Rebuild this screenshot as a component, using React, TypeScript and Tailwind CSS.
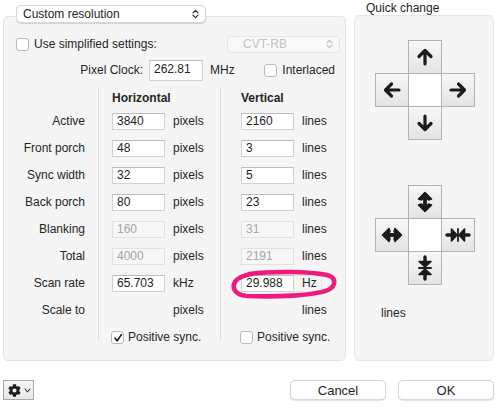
import { FaCog } from "react-icons/fa";

const Checkbox = ({ checked = false }: { checked?: boolean }) => (
  <span className="flex h-[13px] w-[13px] shrink-0 items-center justify-center rounded-[3px] border border-[#b9b9b9] bg-white">
    {checked && (
      <svg width="10" height="10" viewBox="0 0 10 10">
        <path d="M2 5.2 L4.2 7.8 L8.4 1.6" fill="none" stroke="#1a1a1a" strokeWidth="1.6" strokeLinecap="round" strokeLinejoin="round" />
      </svg>
    )}
  </span>
);

const UpDown = ({ color = "#2a2a2a" }: { color?: string }) => (
  <svg width="7" height="10" viewBox="0 0 7 10">
    <path d="M1 3.8 L3.5 1.3 L6 3.8 M1 6.2 L3.5 8.7 L6 6.2" fill="none" stroke={color} strokeWidth="1.2" strokeLinecap="round" strokeLinejoin="round" />
  </svg>
);

const Field = ({ value, disabled = false }: { value: string; disabled?: boolean }) => (
  <div
    className={
      disabled
        ? "flex h-[17px] w-[53px] items-center border border-[#e1e1e1] bg-[#f7f7f7] px-[4px] text-[#a5a5a5]"
        : "flex h-[17px] w-[53px] items-center border border-[#d2d2d2] border-t-[#bdbdbd] bg-white px-[4px] text-[#1e1e1e]"
    }
  >
    {value}
  </div>
);

type Row = { label: string; h?: string; hUnit: string; hDis?: boolean; v?: string; vUnit: string; vDis?: boolean };

const rows: Row[] = [
  { label: "Active", h: "3840", hUnit: "pixels", v: "2160", vUnit: "lines" },
  { label: "Front porch", h: "48", hUnit: "pixels", v: "3", vUnit: "lines" },
  { label: "Sync width", h: "32", hUnit: "pixels", v: "5", vUnit: "lines" },
  { label: "Back porch", h: "80", hUnit: "pixels", v: "23", vUnit: "lines" },
  { label: "Blanking", h: "160", hUnit: "pixels", hDis: true, v: "31", vUnit: "lines", vDis: true },
  { label: "Total", h: "4000", hUnit: "pixels", hDis: true, v: "2191", vUnit: "lines", vDis: true },
  { label: "Scan rate", h: "65.703", hUnit: "kHz", vUnit: "Hz" },
  { label: "Scale to", hUnit: "pixels", vUnit: "lines" },
];

const ink = "#1b1b1b";
const stroke = { fill: "none", stroke: ink, strokeLinecap: "round" as const, strokeLinejoin: "round" as const };
const solid = { fill: ink, stroke: ink, strokeLinejoin: "round" as const, strokeWidth: 1.6 };

const Arrow = ({ rot }: { rot: string }) => (
  <svg width="20" height="20" viewBox="0 0 20 20" className={rot}>
    <path d="M10 17 V4 M4 9.5 L10 3.5 L16 9.5" {...stroke} strokeWidth="3.2" />
  </svg>
);

// vertical double-headed arrow
const Double = ({ rot }: { rot: string }) => (
  <svg width="24" height="24" viewBox="0 0 24 24" className={rot}>
    <path d="M12 7 V17" {...stroke} strokeWidth="3.8" />
    <path d="M5.5 9 L12 2.5 L18.5 9 L15.5 10 L12 7 L8.5 10 Z" {...solid} />
    <path d="M5.5 15 L12 21.5 L18.5 15 L15.5 14 L12 17 L8.5 14 Z" {...solid} />
  </svg>
);

// two arrows pointing in to a bar
const Squeeze = ({ rot }: { rot: string }) => (
  <svg width="26" height="26" viewBox="0 0 26 26" className={rot}>
    <path d="M13 2 V7 M13 24 V19" {...stroke} strokeWidth="3.4" />
    <path d="M7 6.5 L19 6.5 L13 12 Z" {...solid} />
    <path d="M7 19.5 L19 19.5 L13 14 Z" {...solid} />
    <path d="M7 13 H19" fill="none" stroke={ink} strokeWidth="1.8" strokeLinecap="round" />
  </svg>
);

const cell = "flex h-[34px] w-[34px] items-center justify-center border border-[#b3b3b3] bg-linear-to-b from-[#f7f7f7] to-[#e4e4e4]";

const Cross = ({ top, left, right, bottom }: { top: React.ReactNode; left: React.ReactNode; right: React.ReactNode; bottom: React.ReactNode }) => (
  <div className="grid grid-cols-[33px_33px_33px] grid-rows-[33px_33px_33px]">
    <div className="col-start-2 row-start-2 h-[34px] w-[34px] bg-white" />
    <div className={`${cell} col-start-2 row-start-1`}>{top}</div>
    <div className={`${cell} col-start-1 row-start-2`}>{left}</div>
    <div className={`${cell} col-start-3 row-start-2`}>{right}</div>
    <div className={`${cell} col-start-2 row-start-3`}>{bottom}</div>
  </div>
);

export default function App() {
  return (
    <div className="relative h-[413px] w-[504px] overflow-hidden bg-white font-['Liberation_Sans',Arial,sans-serif] text-[12px] leading-[15px] text-[#252525]">
      <div className="flex">
        {/* left column */}
        <div className="ml-[3px] flex w-[343px] flex-col">
          <div className="relative z-10 ml-[13px] mt-[5px] flex h-[18px] w-[190px] items-center justify-between rounded-[5px] border border-[#d8d8d8] bg-white pl-[6px] pr-[6px] shadow-[0_0.5px_1px_rgba(0,0,0,0.15)]">
            <span>Custom resolution</span>
            <UpDown />
          </div>
          <div className="relative -mt-[7px] flex h-[345px] flex-col rounded-[5px] border border-[#e3e3e3] bg-[#f5f5f5]">
            <div className="ml-[12px] mt-[18px] flex h-[18px] items-center">
              <Checkbox />
              <span className="ml-[5px]">Use simplified settings:</span>
              <div className="ml-auto mr-[5px] flex h-[17px] w-[113px] items-center justify-between rounded-[4px] border border-[#e6e6e6] bg-[#f9f9f9] pl-[15px] pr-[6px] text-[#c2c2c2]">
                <span>CVT-RB</span>
                <UpDown color="#c2c2c2" />
              </div>
            </div>
            <div className="mt-[7px] flex h-[21px] items-center">
              <span className="w-[139px] text-right">Pixel Clock:</span>
              <div className="ml-[6px] flex h-[21px] w-[54px] items-center border border-[#d2d2d2] border-t-[#bdbdbd] bg-white px-[4px] pb-[2px]">262.81</div>
              <span className="ml-[7px]">MHz</span>
              <div className="ml-auto mr-[10px] flex items-center">
                <Checkbox />
                <span className="ml-[5px]">Interlaced</span>
              </div>
            </div>

            <div className="mt-[7px] flex">
              <div className="flex w-[94px] flex-col pr-[13px] text-right">
                <div className="h-[20px]" />
                {rows.map((r) => (
                  <div key={r.label} className="flex h-[27px] items-center justify-end">
                    {r.label}
                  </div>
                ))}
              </div>
              <div className="h-[252px] w-px bg-[#dcdcdc]" />
              <div className="flex w-[121px] flex-col pl-[13px]">
                <div className="flex h-[20px] items-center font-bold">Horizontal</div>
                {rows.map((r) => (
                  <div key={r.label} className="flex h-[27px] items-center">
                    {r.h !== undefined ? <Field value={r.h} disabled={r.hDis} /> : <div className="w-[53px]" />}
                    <span className="ml-[8px]">{r.hUnit}</span>
                  </div>
                ))}
                <div className="-ml-[1px] flex h-[27px] items-center">
                  <Checkbox checked />
                  <span className="ml-[4px]">Positive sync.</span>
                </div>
              </div>
              <div className="h-[252px] w-px bg-[#dcdcdc]" />
              <div className="flex flex-1 flex-col pl-[20px]">
                <div className="flex h-[20px] items-center font-bold">Vertical</div>
                {rows.map((r) =>
                  r.vUnit === "Hz" ? (
                    <div key={r.label} className="flex h-[27px] items-center">
                      <Field value="29.988" />
                      <span className="flex h-[17px] w-[28px] items-center border-y border-r border-[#e4e4e4] pl-[8px]">Hz</span>
                    </div>
                  ) : (
                    <div key={r.label} className="flex h-[27px] items-center">
                      {r.v !== undefined ? <Field value={r.v} disabled={r.vDis} /> : <div className="w-[53px]" />}
                      <span className="ml-[8px]">{r.vUnit}</span>
                    </div>
                  )
                )}
                <div className="-ml-[1px] flex h-[27px] items-center">
                  <Checkbox />
                  <span className="ml-[4px]">Positive sync.</span>
                </div>
              </div>
            </div>

            {/* annotation circle */}
            <svg className="pointer-events-none absolute left-[225px] top-[252px]" width="110" height="32" viewBox="0 0 110 32">
              <path
                d="M20 5 C45 2 80 2.5 98 6 C108 8.5 107 17 99 21 C85 27 45 28 18 27 C5 26 3 18 6 13 C8 9 13 6.5 24 4.7"
                fill="none"
                stroke="#ef1a7c"
                strokeWidth="4.6"
                strokeLinecap="round"
              />
            </svg>
          </div>
        </div>

        {/* right column */}
        <div className="ml-[8px] flex w-[140px] flex-col">
          <div className="ml-[12px] mt-[2px] h-[13px] leading-[13px]">Quick change</div>
          <div className="flex h-[346px] flex-col items-center rounded-[5px] border border-[#e6e6e6] bg-[#f5f5f5]">
            <div className="mt-[24px]">
              <Cross
                top={<Arrow rot="" />}
                left={<Arrow rot="-rotate-90" />}
                right={<Arrow rot="rotate-90" />}
                bottom={<Arrow rot="rotate-180" />}
              />
            </div>
            <div className="mt-[46px]">
              <Cross
                top={<Double rot="" />}
                left={<Double rot="rotate-90" />}
                right={<Squeeze rot="rotate-90" />}
                bottom={<Squeeze rot="" />}
              />
            </div>
            <div className="mt-[22px] w-full pl-[26px]">lines</div>
          </div>
        </div>
      </div>

      {/* bottom bar */}
      <div className="mt-[19px] flex items-center pr-[10px]">
        <div className="ml-[3px] flex h-[20px] w-[31px] items-center gap-[3px] border border-[#a9a9a9] bg-linear-to-b from-[#f6f6f6] to-[#e8e8e8] pl-[4px]">
          <FaCog size={13} color="#1c1c1c" />
          <svg width="7" height="5" viewBox="0 0 7 5">
            <path d="M1 1 L3.5 3.8 L6 1" fill="none" stroke="#444" strokeWidth="1.1" strokeLinecap="round" strokeLinejoin="round" />
          </svg>
        </div>
        <div className="ml-auto flex h-[20px] w-[96px] items-center justify-center rounded-[5px] border border-[#d6d6d6] bg-white text-[13px] shadow-[0_0.5px_1px_rgba(0,0,0,0.12)]">
          Cancel
        </div>
        <div className="ml-[12px] flex h-[20px] w-[96px] items-center justify-center rounded-[5px] border border-[#d6d6d6] bg-white text-[13px] shadow-[0_0.5px_1px_rgba(0,0,0,0.12)]">
          OK
        </div>
      </div>
    </div>
  );
}
